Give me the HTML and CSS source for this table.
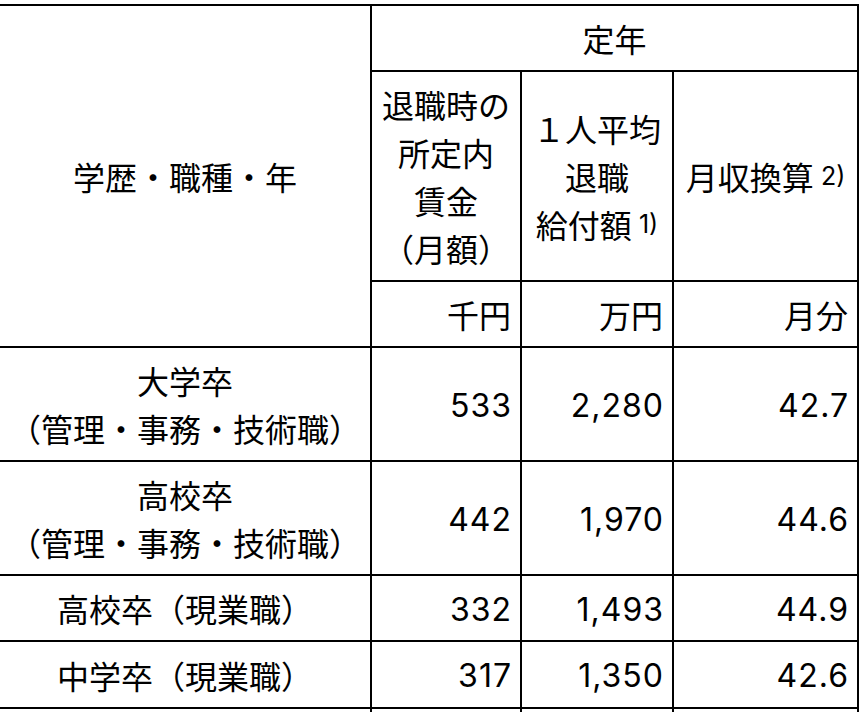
FILE: index.html
```html
<!DOCTYPE html>
<html lang="ja">
<head>
<meta charset="utf-8">
<title>定年退職給付額</title>
<link rel="stylesheet" href="styles.css">
</head>
<body>
<table class="tbl">
  <colgroup>
    <col class="c1"><col class="c2"><col class="c3"><col class="c4">
  </colgroup>
  <tr class="r-top">
    <th rowspan="3" class="cat">学歴・職種・年</th>
    <th colspan="3" class="grp">定年</th>
  </tr>
  <tr class="r-head">
    <th class="hd">退職時の<br>所定内<br>賃金<br>（月額）</th>
    <th class="hd">１人平均<br>退職<br>給付額 <span class="note">1)</span></th>
    <th class="hd">月収換算 <span class="note">2)</span></th>
  </tr>
  <tr class="r-unit">
    <td class="num">千円</td>
    <td class="num">万円</td>
    <td class="num">月分</td>
  </tr>
  <tr class="r-tall">
    <td class="label">大学卒<br>（管理・事務・技術職）</td>
    <td class="num"><span class="fig">533</span></td>
    <td class="num"><span class="fig">2,280</span></td>
    <td class="num"><span class="fig">42.7</span></td>
  </tr>
  <tr class="r-tall">
    <td class="label">高校卒<br>（管理・事務・技術職）</td>
    <td class="num"><span class="fig">442</span></td>
    <td class="num"><span class="fig">1,970</span></td>
    <td class="num"><span class="fig">44.6</span></td>
  </tr>
  <tr class="r-row">
    <td class="label">高校卒（現業職）</td>
    <td class="num"><span class="fig">332</span></td>
    <td class="num"><span class="fig">1,493</span></td>
    <td class="num"><span class="fig">44.9</span></td>
  </tr>
  <tr class="r-row r-last">
    <td class="label">中学卒（現業職）</td>
    <td class="num"><span class="fig">317</span></td>
    <td class="num"><span class="fig">1,350</span></td>
    <td class="num"><span class="fig">42.6</span></td>
  </tr>
  <tr class="r-row">
    <td class="label"></td>
    <td class="num"></td>
    <td class="num"></td>
    <td class="num"></td>
  </tr>
</table>
</body>
</html>
```
FILE: styles.css
```css
html, body {
  margin: 0;
  padding: 0;
  background: #fff;
}

body {
  font-family: "Noto Sans CJK JP", "Noto Sans", sans-serif;
  color: #000;
  font-size: 32px;
  line-height: 48px;
}

.tbl {
  border-collapse: separate;
  border-spacing: 0;
  table-layout: fixed;
  width: 859px;
  margin-top: 4px;
  border-top: 2px solid #000;
}

.c1 { width: 372px; }
.c2 { width: 150px; }
.c3 { width: 152px; }
.c4 { width: 185px; }

.tbl th,
.tbl td {
  box-sizing: border-box;
  border-right: 2px solid #000;
  border-bottom: 2px solid #000;
  padding: 0 9px 0 0;
  font-weight: normal;
  vertical-align: middle;
  white-space: nowrap;
}

.tbl th {
  text-align: center;
  padding: 0;
}

.r-top th { height: 66px; }
.r-head th { height: 210px; }
.r-unit td { height: 66px; }
.r-tall td { height: 114px; }
.r-row td { height: 66px; }
.r-last td { height: 67px; }

.label {
  text-align: center;
}

.tbl td.label {
  padding: 0;
}

.num {
  text-align: right;
}

.fig {
  font-family: Inter, "Liberation Sans", sans-serif;
  font-weight: 400;
  letter-spacing: 1px;
  margin-right: -1px;
}

.note {
  font-family: Inter, "Liberation Sans", sans-serif;
  font-weight: 400;
  font-size: 25px;
  vertical-align: 5px;
  line-height: 1;
}
```
